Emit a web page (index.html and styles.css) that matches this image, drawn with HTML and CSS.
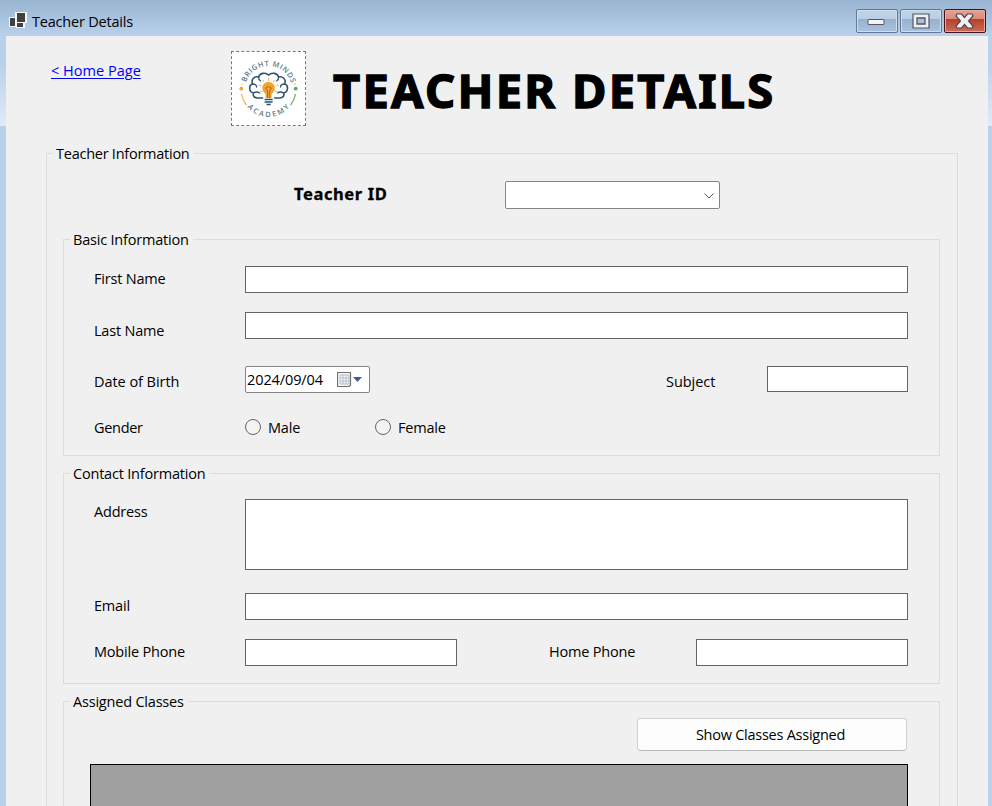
FILE: index.html
```html
<!DOCTYPE html>
<html lang="en">
<head>
<meta charset="utf-8">
<title>Teacher Details</title>
<link rel="stylesheet" href="styles.css">
</head>
<body>
<div class="window">
  <header class="titlebar">
    <svg class="app-icon" width="18" height="16" viewBox="0 0 18 16" shape-rendering="crispEdges">
      <path fill="#f4f6f8" d="M0 5h6V0h12v11h-2v5H7v-1H0z"/>
      <path fill="#404040" d="M1 6h5v8H1zM8 1h8v9H8zM8 11h6v4H8z"/>
    </svg>
    <span class="caption">Teacher Details</span>
    <div class="controls">
      <div class="control"><svg class="minimize" width="18" height="8" viewBox="0 0 18 8"><rect x="1" y="1.500" width="16" height="5" rx=".5" fill="#f4f4f4" stroke="#535666"/></svg></div>
      <div class="control"><svg width="18" height="16" viewBox="0 0 18 16"><path d="M1 1h16v14H1z" fill="#efefef" stroke="#535666" stroke-width="1.200"/><path d="M5 5h8v6H5z" fill="#a9c2dc" stroke="#535666" stroke-width="1.300"/></svg></div>
      <div class="control close"><svg width="19" height="16" viewBox="0 0 19 16"><path d="M2 1h4.500L9.500 4.500 12.500 1H17l1 2-4.500 5 4.500 5-1 2h-4.500l-3-3.500-3 3.500H2l-1-2 4.500-5L1 3z" fill="#f0f0f0" stroke="#4d4654" stroke-width="1.200"/></svg></div>
    </div>
  </header>
  <div class="frame">
    <main class="client">
      <div class="heading">
        <a class="home" href="#">&lt; Home Page</a>
        <div class="logo">
          <svg width="73" height="73" viewBox="0 0 73 73">
            <defs>
              <path id="arc-top" d="M13 37.500A23.500 23.500 0 0 1 60 37.500"/>
              <path id="arc-bottom" d="M9 37.500A27.500 27.500 0 0 0 64 37.500"/>
            </defs>
            <g class="logo-text">
              <text><textPath href="#arc-top" startOffset="7" textLength="60">BRIGHT MINDS</textPath></text>
              <text><textPath href="#arc-bottom" startOffset="19" textLength="48">ACADEMY</textPath></text>
            </g>
            <g transform="translate(-.4 -1)">
              <path d="M31 47h-5c-4 0-5-3-4-5-5-1-5-8-1-9-2-5 2-8 6-7 1-4 7-5 10-2 3-3 9-2 10 2 4-1 8 2 6 7 4 1 4 8-1 9 1 2 0 5-4 5h-5" fill="none" stroke="#2f566f" stroke-width="1.600" stroke-linecap="round"/>
              <path d="M21 33q4 0 4 3M27 26q0 3 2 4M22 42q3-2 6 0M53 33q-4 0-4 3M47 26q0 3-2 4M52 42q-3-2-6 0" fill="none" stroke="#2f566f" stroke-width="1.300" stroke-linecap="round"/>
              <g stroke="#f4b85f" stroke-width="1.100"><path d="M37 27v3M31 29l1.500 2M43 29l-1.500 2M27 34l3 1M47 34l-3 1M28 41l3-1M46 41l-3-1"/></g>
              <path d="M34 47v-4c-6-5-3-12 3-12s9 7 3 12v4z" fill="#f2a32f"/>
              <path d="M36 47v-7l-2-3q3-3 6 0l-2 3v7" fill="none" stroke="#a96c28"/>
              <path d="M33 48.500h8M33 51h8M35 53.500h4" stroke="#294e68" stroke-width="1.600"/>
            </g>
            <path d="M9.500 42q1 6 5 11" fill="none" stroke="#f0b75f" stroke-width="1.400"/>
            <path d="M63.500 42q-1 6-5 11" fill="none" stroke="#82b16c" stroke-width="1.400"/>
            <circle cx="9.300" cy="36.700" r="1.900" fill="#f2a32f"/><circle cx="63.700" cy="36.700" r="1.900" fill="#66a64e"/>
            <circle cx="10" cy="32" r=".7" fill="#f0b75f"/><circle cx="63" cy="32" r=".7" fill="#82b16c"/>
          </svg>
        </div>
        <h1>TEACHER DETAILS</h1>
      </div>

      <section class="group outer">
        <div class="legend"><span>Teacher Information</span></div>
        <div class="id-row">
          <label>Teacher ID</label>
          <div class="combo"><svg width="10" height="6" viewBox="0 0 10 6"><path d="M.5.500 5 5 9.500.500" fill="none" stroke="#555"/></svg></div>
        </div>

        <section class="group basic">
          <div class="legend"><span>Basic Information</span></div>
          <div class="row first"><label>First Name</label><div class="field wide"></div></div>
          <div class="row last"><label>Last Name</label><div class="field wide"></div></div>
          <div class="row birth">
            <label>Date of Birth</label>
            <div class="date">
              <span>2024/09/04</span>
              <svg width="26" height="16" viewBox="0 0 26 16">
                <path d="M.5.500h13v12.500L12 14.500H.5z" fill="#f4f6fa" stroke="#766f70" stroke-width="1.200"/>
                <path d="M3 3h9v9H3zM6 3v9M9 3v9M3 6h9M3 9h9" fill="none" stroke="#b4bdcb"/>
                <path d="M16 5h9l-4.500 5z" fill="#435c91"/>
              </svg>
            </div>
            <label class="second subject">Subject</label><div class="field short"></div>
          </div>
          <div class="row gender">
            <label>Gender</label>
            <div class="radio"><i></i><span>Male</span></div>
            <div class="radio"><i></i><span>Female</span></div>
          </div>
        </section>

        <section class="group contact">
          <div class="legend"><span>Contact Information</span></div>
          <div class="row address"><label>Address</label><div class="field wide"></div></div>
          <div class="row email"><label>Email</label><div class="field wide"></div></div>
          <div class="row phones">
            <label>Mobile Phone</label><div class="field phone"></div>
            <label class="second">Home Phone</label><div class="field phone"></div>
          </div>
        </section>

        <section class="group classes">
          <div class="legend"><span>Assigned Classes</span></div>
          <div class="button"><span>Show Classes Assigned</span></div>
          <div class="data-grid"></div>
        </section>
      </section>
    </main>
  </div>
</div>
</body>
</html>
```
FILE: styles.css
```css
* { box-sizing: border-box; }
body { margin: 0; overflow: hidden; font: 14.5px/20px "Open Sans", sans-serif; letter-spacing: -0.2px; color: #000; }
svg { display: block; flex: none; }
.window { height: 806px; overflow: hidden; display: flex; flex-direction: column; background: #b9d1ea; }
.titlebar { height: 36px; flex: none; display: flex; padding-left: 9px; background: linear-gradient(#99b4d1, #b9d1ea); }
.app-icon { margin-top: 12px; }
.caption { margin: 12px 0 0 5px; }
.controls { display: flex; gap: 2px; margin: 9px 6px 0 auto; }
.control { width: 42px; height: 24px; display: flex; align-items: center; justify-content: center; border: 1px solid #60799b; border-radius: 2px; box-shadow: inset 0 0 0 1px #cfdeed; background: linear-gradient(#c0d4e9 0, #b9cee4 42%, #98b2ce 43%, #a9c3de 100%); }
.control svg { margin: -1px 1px 0 0; }
.control .minimize { margin: 2px 2px 0 0; }
.control.close { border-color: #43131d; box-shadow: inset 0 0 0 1px #e6aaa0; background: linear-gradient(#e8a092 0, #dc8a7c 42%, #b6402a 43%, #cc6d58 100%); }
.frame { flex: 1; min-height: 0; display: flex; padding: 0 4px 0 6px; background: linear-gradient(#b9d1ea, #b9d1ea 30%, #e0ebf7) 0 0 / 100% 90px no-repeat #b9d1ea; }
.client { flex: 1; min-width: 0; background: #f0f0f0; overflow: hidden; }
.heading { height: 117px; display: flex; align-items: flex-start; padding: 15px 0 0 45px; }
.home { width: 180px; margin-top: 10px; color: #00f; letter-spacing: 0.02px; text-underline-offset: 2px; }
.logo { width: 75px; height: 75px; border: 1px dashed #777; background: #fff; }
.logo-text { font: 600 7.4px "Open Sans", sans-serif; fill: #5b7a8e; letter-spacing: 0; }
h1 { margin: 9px 0 0 27px; font: bold 47px/60px "Noto Sans", sans-serif; letter-spacing: 2.3px; white-space: nowrap; -webkit-text-stroke: 1.4px #000; }
.group { border: 1px solid #dcdcdc; }
.legend { height: 20px; margin: -11px 0 0 6px; display: flex; }
.legend span { height: 21px; padding: 1px 4px 0 3px; background: #f0f0f0; white-space: nowrap; }
.outer { width: 912px; height: 800px; margin-left: 40px; padding: 0 17px 0 16px; }
.outer > .legend { margin-left: -10px; letter-spacing: -0.25px; }
.id-row { display: flex; height: 76px; padding: 18px 0 0 231px; }
.id-row label { width: 211px; margin-top: 3px; font: bold 16.5px/20px "Noto Sans", sans-serif; letter-spacing: 0.6px; white-space: nowrap; -webkit-text-stroke: 0.3px #000; }
.combo { width: 215px; height: 28px; display: flex; align-items: center; justify-content: flex-end; padding: 1px 5px 0 0; border: 1px solid #858585; border-radius: 2px; background: #fff; }
.basic { height: 217px; }
.contact { height: 211px; margin-top: 17px; }
.classes { height: 140px; margin-top: 17px; }
.row { display: flex; align-items: flex-start; padding: 0 31px 0 30px; }
.row label { width: 151px; flex: none; white-space: nowrap; }
.field { height: 27px; border: 1px solid #646464; background: #fff; }
.wide { flex: 1; }
.first { height: 46px; margin-top: 17px; }
.first label { margin-top: 3px; }
.last { height: 54px; }
.last label { margin-top: 9px; }
.birth { height: 52px; }
.birth label { margin-top: 6px; letter-spacing: -0.05px; }
.date { width: 125px; height: 27px; display: flex; align-items: center; padding: 0 6px 0 1px; justify-content: space-between; border: 1px solid #858585; border-radius: 2px; background: #fff; }
.date span { letter-spacing: -0.1px; }
.row .second { width: 147px; margin-left: auto; }
.row .subject { width: 101px; }
.short { width: 141px; height: 26px; }
.gender label { margin-top: 0; letter-spacing: -0.3px; }
.radio { width: 130px; display: flex; align-items: center; gap: 7px; }
.radio i { width: 16px; height: 16px; margin-top: -2px; border: 1px solid #666; border-radius: 50%; background: #f3f3f3; }
.address { height: 94px; margin-top: 16px; }
.address label { margin-top: 3px; }
.address .field { height: 71px; }
.email { height: 46px; }
.email label, .phones label { margin-top: 3px; }
.phone { width: 212px; }
.button { width: 270px; height: 33px; margin: 7px 32px 0 auto; display: flex; align-items: center; justify-content: center; border: 1px solid #d0d0d0; border-bottom-color: #b8b8b8; border-radius: 4px; background: #fdfdfd; }
.button span { margin-right: 3px; letter-spacing: -0.25px; }
.data-grid { height: 100px; margin: 13px 31px 0 26px; border: 1px solid #000; background: #a0a0a0; }
```
